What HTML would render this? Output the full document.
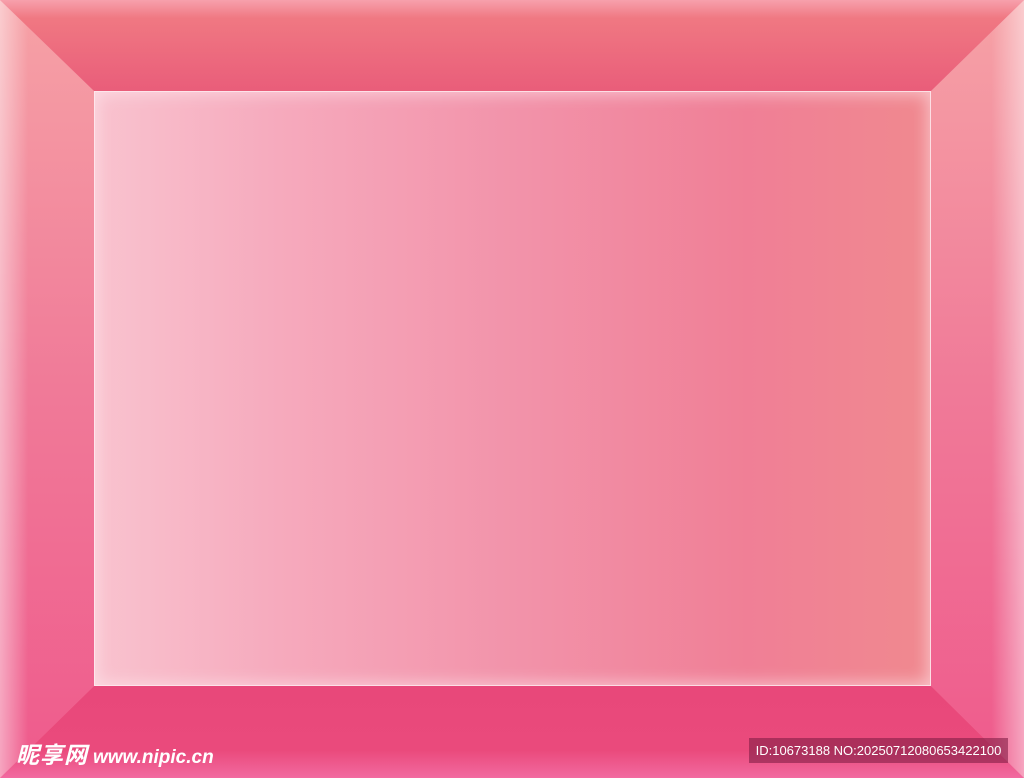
<!DOCTYPE html>
<html><head><meta charset="utf-8"><style>
html,body{margin:0;padding:0;width:1024px;height:778px;overflow:hidden;background:#ee6a8a}
.wrap{position:relative;width:1024px;height:778px}
svg{position:absolute;left:0;top:0}
.inner{position:absolute;left:94px;top:91px;width:837px;height:595px;background:linear-gradient(90deg,#f9c3cf 0%,#f6aabd 22%,#f293aa 50%,#f07f96 78%,#f0898f 100%);box-shadow:inset 0 0 16px 3px rgba(255,235,240,0.6),inset 0 0 0 1px rgba(255,235,240,0.8)}
.logo{position:absolute;left:16px;top:736px;color:#fff;font:italic bold 23px "Liberation Sans","Noto Sans CJK SC",sans-serif;letter-spacing:1px;white-space:nowrap}
.logo span{font-size:19px;letter-spacing:0;margin-left:5px}
.id{position:absolute;left:749px;top:738px;width:259px;height:25px;background:rgba(130,30,70,0.6);color:#fff;font:13px "Liberation Sans",sans-serif;line-height:25px;text-align:center;white-space:nowrap}
</style></head><body><div class="wrap">
<svg width="1024" height="778">
<defs>
<linearGradient id="t" x1="0" y1="0" x2="0" y2="1"><stop offset="0" stop-color="#f7a0ac"/><stop offset="0.2" stop-color="#f07882"/><stop offset="1" stop-color="#e95d7a"/></linearGradient>
<linearGradient id="b" x1="0" y1="0" x2="0" y2="1"><stop offset="0" stop-color="#e8487a"/><stop offset="0.7" stop-color="#ea4a7c"/><stop offset="1" stop-color="#f26aa0"/></linearGradient>
<linearGradient id="l" x1="0" y1="0" x2="0" y2="1"><stop offset="0" stop-color="#f6a2a6"/><stop offset="0.5" stop-color="#f07a98"/><stop offset="1" stop-color="#ef5a8c"/></linearGradient>
<linearGradient id="lh" x1="0" y1="0" x2="1" y2="0"><stop offset="0" stop-color="#fff" stop-opacity="0.45"/><stop offset="0.3" stop-color="#fff" stop-opacity="0"/></linearGradient>
<linearGradient id="rh" x1="1" y1="0" x2="0" y2="0"><stop offset="0" stop-color="#fff" stop-opacity="0.45"/><stop offset="0.35" stop-color="#fff" stop-opacity="0"/></linearGradient>
</defs>
<polygon points="0,0 1024,0 931,91 94,91" fill="url(#t)"/>
<polygon points="0,778 1024,778 931,686 94,686" fill="url(#b)"/>
<polygon points="0,0 94,91 94,686 0,778" fill="url(#l)"/>
<polygon points="0,0 94,91 94,686 0,778" fill="url(#lh)"/>
<polygon points="1024,0 931,91 931,686 1024,778" fill="url(#l)"/>
<polygon points="1024,0 931,91 931,686 1024,778" fill="url(#rh)"/>
</svg>
<div class="inner"></div>
<div class="logo">昵享网<span>www.nipic.cn</span></div>
<div class="id">ID:10673188 NO:20250712080653422100</div>
</div></body></html>
